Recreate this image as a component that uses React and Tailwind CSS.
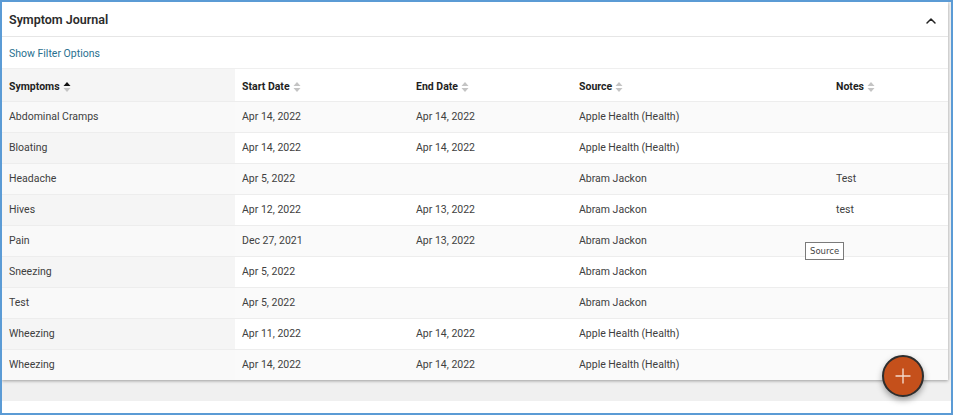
import { ChevronUp, Plus } from 'lucide-react';

const font = { fontFamily: "Roboto, 'Noto Sans', sans-serif" };

const rows = [
  { symptom: 'Abdominal Cramps', start: 'Apr 14, 2022', end: 'Apr 14, 2022', source: 'Apple Health (Health)', notes: '' },
  { symptom: 'Bloating', start: 'Apr 14, 2022', end: 'Apr 14, 2022', source: 'Apple Health (Health)', notes: '' },
  { symptom: 'Headache', start: 'Apr 5, 2022', end: '', source: 'Abram Jackon', notes: 'Test' },
  { symptom: 'Hives', start: 'Apr 12, 2022', end: 'Apr 13, 2022', source: 'Abram Jackon', notes: 'test' },
  { symptom: 'Pain', start: 'Dec 27, 2021', end: 'Apr 13, 2022', source: 'Abram Jackon', notes: '' },
  { symptom: 'Sneezing', start: 'Apr 5, 2022', end: '', source: 'Abram Jackon', notes: '' },
  { symptom: 'Test', start: 'Apr 5, 2022', end: '', source: 'Abram Jackon', notes: '' },
  { symptom: 'Wheezing', start: 'Apr 11, 2022', end: 'Apr 14, 2022', source: 'Apple Health (Health)', notes: '' },
  { symptom: 'Wheezing', start: 'Apr 14, 2022', end: 'Apr 14, 2022', source: 'Apple Health (Health)', notes: '' },
];

const columns = [
  { label: 'Symptoms', width: 'w-[233px]', active: true },
  { label: 'Start Date', width: 'w-[174px]' },
  { label: 'End Date', width: 'w-[163px]' },
  { label: 'Source', width: 'w-[257px]' },
  { label: 'Notes', width: '' },
];

function SortIcon({ active }) {
  return (
    <svg width="8" height="12" viewBox="0 0 8 12" className="ml-[3px] shrink-0">
      <path d="M4 1 L7.5 5 L0.5 5 Z" fill={active ? '#111' : '#c4c4c4'} />
      <path d="M4 11 L7.5 7 L0.5 7 Z" fill="#c4c4c4" />
    </svg>
  );
}

export default function App() {
  return (
    <div className="w-[953px] h-[415px] border-2 border-[#5b9bd5] bg-white relative overflow-hidden" style={font}>
      <div className="bg-[#f0f0f0] h-[399px] pr-[3px]">
        {/* CARD */}
        <div className="bg-white shadow-[0_1px_3px_rgba(0,0,0,0.35)]">
          <div className="h-[35px] pt-[3px] flex items-center justify-between pl-[7px] pr-[9px] border-b border-[#e6e6e6]">
            <span className="text-[12.5px] font-semibold text-[#2b2b2b]">Symptom Journal</span>
            <ChevronUp size={16} strokeWidth={2.2} className="text-[#222]" />
          </div>
          <div className="h-[32px] pt-[2px] flex items-center pl-[7px] border-b border-[#efefef]">
            <span className="text-[10.5px] text-[#29708f]">Show Filter Options</span>
          </div>

          <table className="w-full table-fixed border-collapse text-[10.5px]">
            <thead>
              <tr className="h-[32px]">
                {columns.map(({ label, width, active }) => (
                  <th key={label} className={`${width} text-left font-bold text-[#1f1f1f] px-[7px] pt-[4px] ${active ? 'bg-[#f5f5f5]' : 'bg-white'}`}>
                    <span className="flex items-center">
                      {label}
                      <SortIcon active={active} />
                    </span>
                  </th>
                ))}
              </tr>
            </thead>
            <tbody>
              {rows.map((r, i) => {
                const odd = i % 2 === 0;
                return (
                  <tr key={i} className={`h-[31px] border-t border-[#ededed] text-[#404040] ${odd ? 'bg-[#fafafa]' : 'bg-white'}`}>
                    <td className={`px-[7px] ${odd ? 'bg-[#f9f9f9]' : 'bg-[#f5f5f5]'}`}>{r.symptom}</td>
                    <td className="px-[7px]">{r.start}</td>
                    <td className="px-[7px]">{r.end}</td>
                    <td className="px-[7px]">{r.source}</td>
                    <td className="px-[7px]">{r.notes}</td>
                  </tr>
                );
              })}
            </tbody>
          </table>
        </div>
      </div>

      {/* TOOLTIP */}
      <div className="absolute left-[803px] top-[240px] h-[18px] px-[4px] flex items-center border border-[#7a7a7a] bg-white text-[8.5px] text-[#444]"
        style={{ fontFamily: "'DejaVu Sans', sans-serif" }}>
        Source
      </div>

      {/* FAB */}
      <button className="absolute left-[880px] top-[353px] w-[42px] h-[42px] rounded-full bg-[#c5501b] border-2 border-[#2e2e2e] flex items-center justify-center shadow-[0_3px_6px_rgba(0,0,0,0.35)]">
        <Plus size={24} strokeWidth={1.4} className="text-[#f3d9cc]" />
      </button>
    </div>
  );
}
